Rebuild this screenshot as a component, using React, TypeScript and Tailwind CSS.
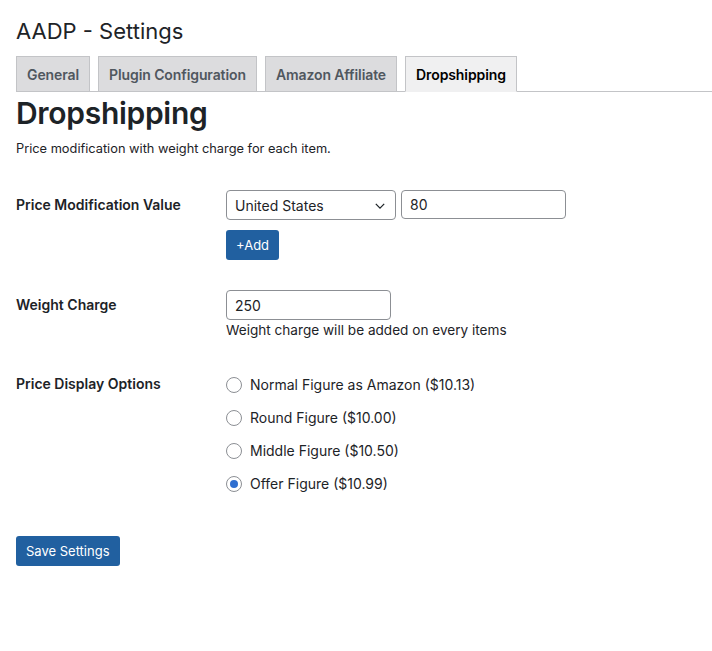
import { useState } from 'react';

const tabs = ['General', 'Plugin Configuration', 'Amazon Affiliate', 'Dropshipping'];

const options = [
  'Normal Figure as Amazon ($10.13)',
  'Round Figure ($10.00)',
  'Middle Figure ($10.50)',
  'Offer Figure ($10.99)',
];

export default function App() {
  const [choice, setChoice] = useState(3);

  return (
    <div className="min-h-screen bg-white text-[#1d2327] text-[13px] font-['Inter','Liberation_Sans',Arial,sans-serif]">
      <div className="pl-4 pt-[17px]">
        <h1 className="text-[22px] leading-[29px] font-normal">AADP - Settings</h1>

        {/* tabs */}
        <div className="mt-[10px] flex items-end border-b border-[#c3c4c7] h-[36px]">
          {tabs.map((t, i) => {
            const active = i === tabs.length - 1;
            return (
              <div
                key={t}
                className={`mr-[8px] h-[36px] -mb-px px-[10px] flex items-center border border-[#c3c4c7] text-[14px] font-semibold tracking-[-0.1px] ${
                  active ? 'bg-[#f0f0f1] text-black border-b-[#f0f0f1]' : 'bg-[#dcdcde] text-[#50575e]'
                }`}
              >
                {t}
              </div>
            );
          })}
        </div>

        <h2 className="text-[30px] leading-[40px] font-semibold tracking-[-0.3px] mt-[1px]">Dropshipping</h2>
        <p className="mt-[7px] leading-[18px] text-[12.8px]">Price modification with weight charge for each item.</p>

        {/* form table */}
        <div className="mt-[32px] grid grid-cols-[210px_1fr] gap-y-[30px] pr-4">
          <div className="text-[14px] font-semibold pt-[4px]">Price Modification Value</div>
          <div>
            <div className="flex gap-[5px]">
              <div className="relative w-[170px] h-[30px] border border-[#8c8f94] rounded-[4px] bg-white flex items-center pl-2 text-[14px]">
                United States
                <svg className="absolute right-[8px] top-[8px]" width="14" height="14" viewBox="0 0 20 20">
                  <path d="M4 7l6 6 6-6" fill="none" stroke="#1d2327" strokeWidth="1.8" />
                </svg>
              </div>
              <input
                defaultValue="80"
                className="w-[165px] h-[29px] border border-[#8c8f94] rounded-[4px] px-2 text-[14px] outline-none"
              />
            </div>
            <button className="mt-[10px] h-[30px] px-[10px] rounded-[3px] bg-[#2160a0] text-white text-[13px] leading-[28px]">
              +Add
            </button>
          </div>

          <div className="text-[14px] font-semibold pt-[4px]">Weight Charge</div>
          <div>
            <input
              defaultValue="250"
              className="w-[165px] h-[30px] border border-[#8c8f94] rounded-[4px] px-2 text-[14px] outline-none"
            />
            <p className="text-[13.6px] leading-[18px] mt-[1px]">Weight charge will be added on every items</p>
          </div>

          <div className="text-[14px] font-semibold pt-[4px]">Price Display Options</div>
          <div className="flex flex-col gap-[14px] pt-[6px]">
            {options.map((o, i) => (
              <label key={o} className="flex items-center gap-[8px] text-[14px] h-[19px] cursor-pointer" onClick={() => setChoice(i)}>
                <span className="w-4 h-4 rounded-full border border-[#8c8f94] bg-white flex items-center justify-center">
                  {choice === i && <span className="w-2 h-2 rounded-full bg-[#2f6fd0]" />}
                </span>
                {o}
              </label>
            ))}
          </div>
        </div>

        <button className="mt-[43px] h-[30px] px-[10px] rounded-[3px] bg-[#2160a0] text-white text-[13px] leading-[28px]">
          Save Settings
        </button>
      </div>
    </div>
  );
}
